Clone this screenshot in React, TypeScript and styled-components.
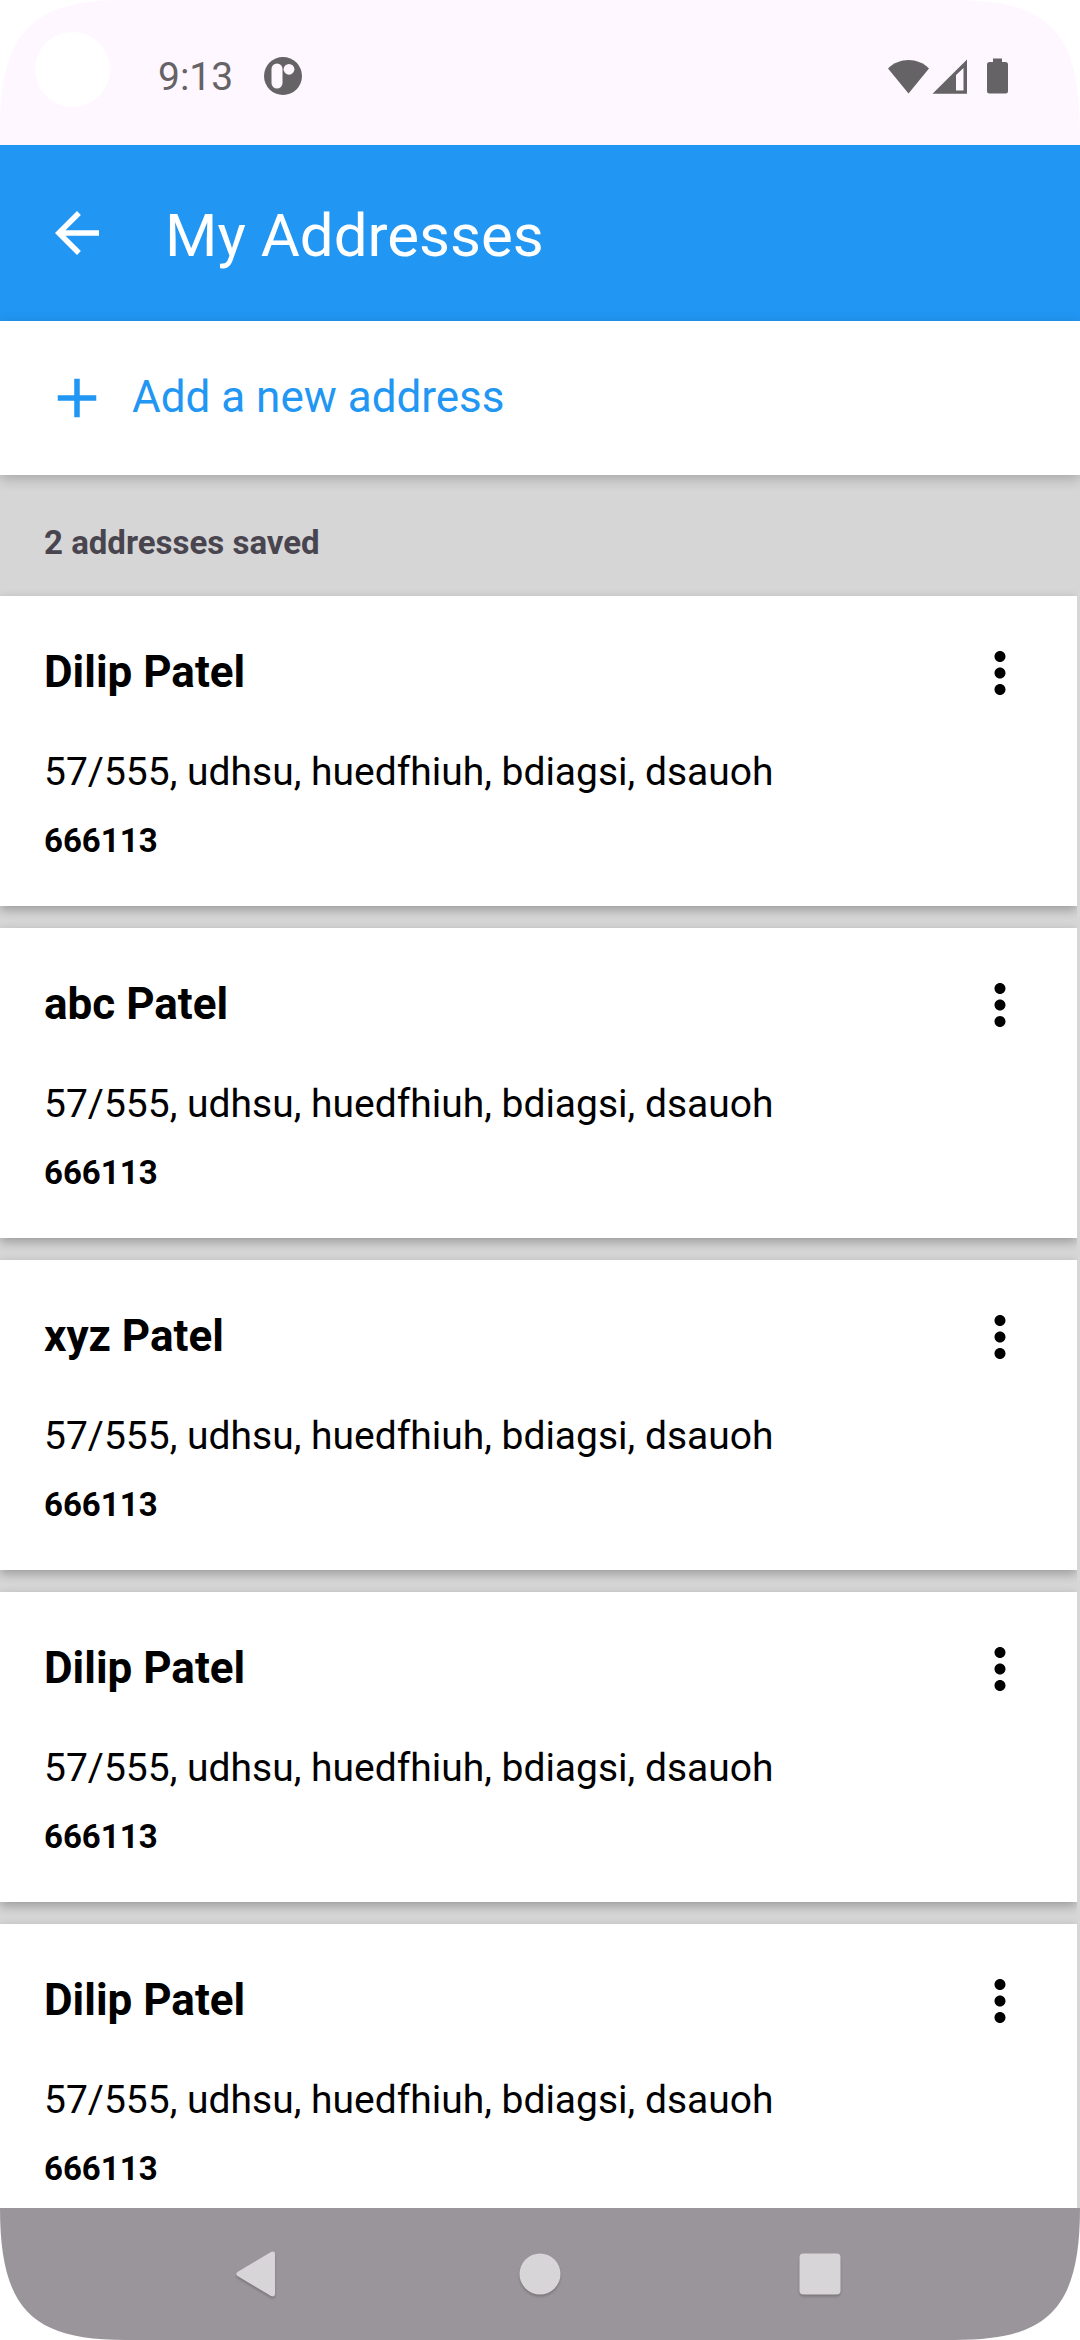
import React from 'react';
import styled, { createGlobalStyle } from 'styled-components';

const GlobalStyle = createGlobalStyle`
  *, *::before, *::after { box-sizing: border-box; }
  body {
    margin: 0;
    background: #ffffff;
    font-family: Roboto, "Liberation Sans", sans-serif;
  }
  h1, h2, p, ul { margin: 0; padding: 0; }
  button {
    border: 0;
    padding: 0;
    background: none;
    font: inherit;
    color: inherit;
    cursor: pointer;
  }
`;

const Screen = styled.div`
  position: relative;
  display: flex;
  flex-direction: column;
  height: 100vh;
  overflow: hidden;
  background: #d6d6d6;
`;

const StatusBar = styled.div`
  flex: none;
  display: flex;
  align-items: center;
  justify-content: space-between;
  height: 145px;
  padding: 6px 70px 0 158px;
  background: #fef7ff;
  color: #666366;
`;

const StatusGroup = styled.div<{ $gap: number }>`
  display: flex;
  align-items: center;
  gap: ${({ $gap }) => $gap}px;
`;

const Clock = styled.span`
  padding-top: 2px;
  font-size: 39px;
  line-height: 46px;
`;

const Glyph = styled.svg`
  display: block;
  flex: none;
`;

const AppBar = styled.header`
  flex: none;
  display: flex;
  align-items: center;
  gap: 55px;
  height: 176px;
  padding: 0 44px;
  background: #2196f3;
  color: #ffffff;
`;

const Title = styled.h1`
  padding-top: 6px;
  font-size: 60px;
  font-weight: 400;
  line-height: 72px;
`;

const AddButton = styled.button`
  && {
    position: relative;
    flex: none;
    display: flex;
    align-items: center;
    gap: 22px;
    height: 154px;
    padding: 0 44px;
    background: #ffffff;
    color: #2196f3;
    font-size: 44px;
    line-height: 52px;
    box-shadow: 0 4px 12px rgba(0, 0, 0, 0.22);
  }
`;

const AddLabel = styled.span`
  padding-bottom: 2px;
`;

const Count = styled.h2`
  flex: none;
  padding: 48px 44px 33px;
  color: #49454f;
  font-size: 33px;
  font-weight: 700;
  line-height: 40px;
`;

const List = styled.ul`
  flex: 1;
  min-height: 0;
  display: flex;
  flex-direction: column;
  gap: 22px;
  margin: -11px 3px 0 0;
  padding-top: 11px;
  overflow-y: auto;
  scrollbar-width: none;
  list-style: none;
`;

const Card = styled.li`
  flex: none;
  display: flex;
  justify-content: space-between;
  align-items: flex-start;
  padding: 44px;
  background: #ffffff;
  color: #000000;
  box-shadow: 0 4px 10px rgba(0, 0, 0, 0.28);
`;

const Details = styled.div`
  display: flex;
  flex-direction: column;
`;

const Name = styled.h2`
  padding-top: 6px;
  font-size: 44px;
  font-weight: 700;
  line-height: 52px;
`;

const Street = styled.p`
  padding-top: 48px;
  font-size: 39px;
  line-height: 52px;
`;

const Pincode = styled.p`
  padding-top: 22px;
  font-size: 33px;
  font-weight: 700;
  line-height: 42px;
`;

const NavBar = styled.nav`
  position: relative;
  flex: none;
  display: flex;
  justify-content: center;
  height: 132px;
  background: #9a959a;
  color: #d7d5d8;
`;

const NavButton = styled.button`
  && {
    display: flex;
    align-items: center;
    justify-content: center;
    width: 280px;
  }
  svg { filter: drop-shadow(0 2px 1px rgba(0, 0, 0, 0.2)); }
`;

const Camera = styled.div`
  position: absolute;
  top: 32px;
  left: 35px;
  width: 75px;
  height: 75px;
  border-radius: 50%;
  background: #ffffff;
`;

const Corner = styled.svg<{ $bottom?: boolean; $right?: boolean }>`
  position: absolute;
  ${({ $bottom }) => ($bottom ? 'bottom: 0;' : 'top: 0;')}
  ${({ $right }) => ($right ? 'right: 0;' : 'left: 0;')}
  transform: scale(${({ $right }) => ($right ? -1 : 1)}, ${({ $bottom }) => ($bottom ? -1 : 1)});
  pointer-events: none;
`;

const RoundedCorner = (props: { $bottom?: boolean; $right?: boolean }) => (
  <Corner width="132" height="132" viewBox="0 0 132 132" aria-hidden="true" {...props}>
    <path d="M0 0H125C33 0 0 30 0 132Z" fill="#ffffff" />
  </Corner>
);

const MaterialIcon = ({ d }: { d: string }) => (
  <Glyph width="66" height="66" viewBox="0 0 24 24" fill="currentColor" aria-hidden="true">
    <path d={d} />
  </Glyph>
);

const ARROW_BACK = 'M20 11H7.83l5.59-5.59L12 4l-8 8 8 8 1.41-1.41L7.83 13H20v-2z';
const PLUS = 'M19 13h-6v6h-2v-6H5v-2h6V5h2v6h6v2z';
const MORE_VERT =
  'M12 8c1.1 0 2-.9 2-2s-.9-2-2-2-2 .9-2 2 .9 2 2 2zm0 2c-1.1 0-2 .9-2 2s.9 2 2 2 2-.9 2-2-.9-2-2-2zm0 6c-1.1 0-2 .9-2 2s.9 2 2 2 2-.9 2-2-.9-2-2-2z';

const STREET = '57/555, udhsu, huedfhiuh, bdiagsi, dsauoh';
const addresses = ['Dilip Patel', 'abc Patel', 'xyz Patel', 'Dilip Patel', 'Dilip Patel'].map(
  (name, id) => ({ id, name, street: STREET, pincode: '666113' }),
);

export default function App() {
  return (
    <>
      <GlobalStyle />
      <Screen>
        <StatusBar>
          <StatusGroup $gap={31}>
            <Clock>9:13</Clock>
            <Glyph width="38" height="38" viewBox="0 0 38 38" aria-hidden="true">
              <circle cx="19" cy="19" r="19" fill="currentColor" />
              <rect x="7.5" y="6.5" width="11" height="25" rx="5.5" fill="#fef7ff" />
              <circle cx="25" cy="12.3" r="5.4" fill="#fef7ff" />
            </Glyph>
          </StatusGroup>
          <Glyph width="122" height="36" viewBox="0 0 122 36" fill="currentColor" aria-hidden="true">
            <path d="M0 10.500C11-1 30-1 41 10.500L20.500 35.500Z" />
            <path fillRule="evenodd" d="M44.500 35.800L79 1.500V35.800ZM68 17V32.500H75.500V10Z" />
            <path d="M105 0.500h9v3.500h3.500q2.500 0 2.500 2.500v26.500q0 2.500-2.500 2.500h-16q-2.500 0-2.500-2.500V6.500q0-2.500 2.500-2.500h3.500z" />
          </Glyph>
        </StatusBar>

        <AppBar>
          <button type="button" aria-label="Back">
            <MaterialIcon d={ARROW_BACK} />
          </button>
          <Title>My Addresses</Title>
        </AppBar>

        <AddButton type="button">
          <MaterialIcon d={PLUS} />
          <AddLabel>Add a new address</AddLabel>
        </AddButton>

        <Count>2 addresses saved</Count>

        <List>
          {addresses.map(({ id, name, street, pincode }) => (
            <Card key={id}>
              <Details>
                <Name>{name}</Name>
                <Street>{street}</Street>
                <Pincode>{pincode}</Pincode>
              </Details>
              <button type="button" aria-label={`Options for ${name}`}>
                <MaterialIcon d={MORE_VERT} />
              </button>
            </Card>
          ))}
        </List>

        <NavBar>
          <NavButton type="button" aria-label="Back">
            <Glyph width="48" height="46" viewBox="0 0 48 46" fill="currentColor" aria-hidden="true">
              <path d="M1.500 21L35 1Q39 -0.500 39 3V43Q39 46.500 35 45L1.500 25Q-1 23 1.500 21Z" />
            </Glyph>
          </NavButton>
          <NavButton type="button" aria-label="Home">
            <Glyph width="42" height="42" viewBox="0 0 42 42" fill="currentColor" aria-hidden="true">
              <circle cx="21" cy="21" r="20.500" />
            </Glyph>
          </NavButton>
          <NavButton type="button" aria-label="Recent apps">
            <Glyph width="42" height="42" viewBox="0 0 42 42" fill="currentColor" aria-hidden="true">
              <rect x="0.500" y="0.500" width="41" height="41" rx="4" />
            </Glyph>
          </NavButton>
        </NavBar>

        <Camera />
        <RoundedCorner />
        <RoundedCorner $right />
        <RoundedCorner $bottom />
        <RoundedCorner $bottom $right />
      </Screen>
    </>
  );
}
